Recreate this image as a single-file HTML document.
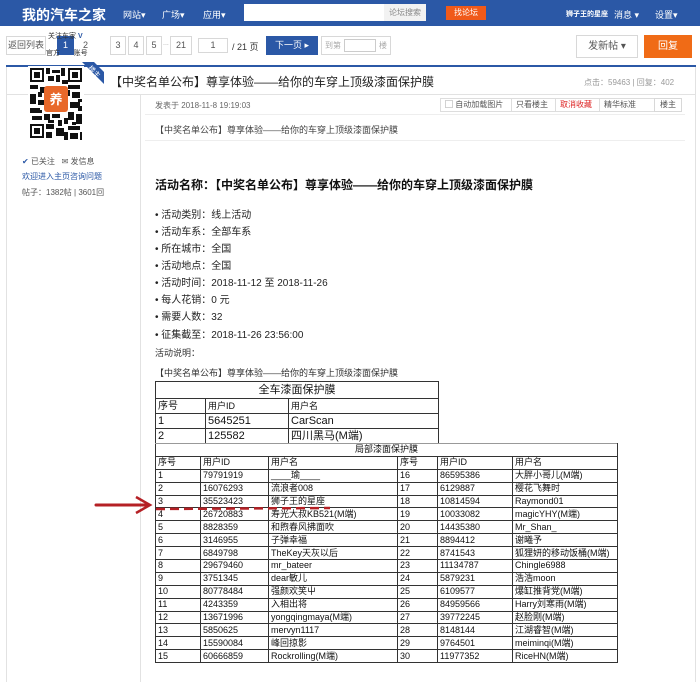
<!DOCTYPE html>
<html><head><meta charset="utf-8"><style>
*{margin:0;padding:0;box-sizing:border-box}
body{width:700px;height:682px;background:#fff;font-family:"Liberation Sans","Noto Sans CJK SC",sans-serif;color:#333;position:relative;overflow:hidden;font-size:9px}
.a{position:absolute;white-space:nowrap}
.nav{left:0;top:0;width:700px;height:26px;background:#2b58a6;color:#fff}
.btn{position:absolute;border:1px solid #d8d8d8;background:#fff;height:19px;line-height:17px;text-align:center;font-size:9px;color:#555;white-space:nowrap;overflow:hidden}
table{border-collapse:collapse;table-layout:fixed;position:absolute;font-family:"Liberation Sans","Noto Sans CJK SC",sans-serif;color:#111}
td{border:1px solid #333;padding:0 2px;white-space:nowrap;overflow:hidden}
.t1 td{font-size:11px;height:15px;line-height:13px}
.t2 td{font-size:9px;height:12.9px;line-height:11px}
.li{left:155px;font-size:10px;color:#222}
</style></head><body>
<div class="a nav">
 <div class="a" style="left:22px;top:5px;font-size:14px;font-weight:bold">我的汽车之家</div>
 <div class="a" style="left:123px;top:8px;font-size:9px">网站▾</div>
 <div class="a" style="left:162px;top:8px;font-size:9px">广场▾</div>
 <div class="a" style="left:203px;top:8px;font-size:9px">应用▾</div>
 <div class="a" style="left:244px;top:4px;width:140px;height:17px;background:#fff"></div>
 <div class="a" style="left:384px;top:4px;width:42px;height:17px;background:#f2f2f2;color:#888;font-size:8px;line-height:17px;text-align:center">论坛搜索</div>
 <div class="a" style="left:446px;top:6px;width:40px;height:14px;background:#f05a1a;font-size:8px;line-height:14px;text-align:center">找论坛</div>
 <div class="a" style="left:566px;top:9px;font-size:7px;font-weight:bold">狮子王的星座</div>
 <div class="a" style="left:614px;top:8px;font-size:9px">消息 ▾</div>
 <div class="a" style="left:655px;top:8px;font-size:9px">设置▾</div>
</div>
<div class="btn" style="left:6px;top:36px;width:40px">返回列表</div>
<div class="btn" style="left:57px;top:36px;width:17px;background:#2b58a6;color:#fff;border-color:#2b58a6">1</div>
<div class="a" style="left:48px;top:31px;font-size:7px;color:#333">关注车家 <b style="color:#2b58a6">V</b></div>
<div class="a" style="left:46px;top:48px;font-size:7px;color:#333">官方 &nbsp;&nbsp;&nbsp;&nbsp;&nbsp; 账号</div>
<div class="a" style="left:83px;top:40px;font-size:9px;color:#555">2</div>
<div class="btn" style="left:110px;top:36px;width:16px">3</div>
<div class="btn" style="left:128px;top:36px;width:16px">4</div>
<div class="btn" style="left:146px;top:36px;width:16px">5</div>
<div class="a" style="left:163px;top:40px;color:#aaa;font-size:7px">...</div>
<div class="btn" style="left:170px;top:36px;width:22px">21</div>
<div class="btn" style="left:198px;top:38px;width:30px;height:15px;line-height:13px">1</div>
<div class="a" style="left:232px;top:40px;font-size:9px">/ 21 页</div>
<div class="btn" style="left:266px;top:36px;width:52px;background:#2b58a6;color:#fff;border-color:#2b58a6">下一页 ▸</div>
<div class="btn" style="left:321px;top:36px;width:70px;text-align:left;padding-left:3px;color:#aaa;font-size:8px">到第<span style="display:inline-block;width:32px;height:13px;border:1px solid #ccc;vertical-align:middle;margin:0 3px"></span>楼</div>
<div class="btn" style="left:576px;top:35px;width:62px;height:23px;line-height:21px;font-size:10px">发新帖 ▾</div>
<div class="a" style="left:644px;top:35px;width:48px;height:23px;background:#f06b16;color:#fff;font-size:10px;line-height:23px;text-align:center">回复</div>
<div class="a" style="left:6px;top:65px;width:690px;height:2px;background:#2b58a6"></div>
<div class="a" style="left:6px;top:67px;width:690px;height:28px;border:1px solid #e2e2e2;border-top:none;background:#fff"></div>
<div class="a" style="left:110px;top:73px;font-size:12px;color:#222">【中奖名单公布】尊享体验——给你的车穿上顶级漆面保护膜</div>
<div class="a" style="left:584px;top:77px;font-size:8px;color:#999">点击：59463 | 回复：402</div>
<div class="a" style="left:140px;top:95px;width:1px;height:587px;background:#e2e2e2"></div>
<div class="a" style="left:6px;top:95px;width:1px;height:587px;background:#e2e2e2"></div>
<div class="a" style="left:695px;top:95px;width:1px;height:587px;background:#e2e2e2"></div>
<svg class="a" style="left:28px;top:66px" width="56" height="76" viewBox="0 0 56 76">
<rect width="56" height="76" fill="#fff"/>
<g fill="#111">
<rect x="2" y="2" width="14" height="14"/><rect x="40" y="2" width="14" height="14"/><rect x="2" y="58" width="14" height="14"/>
</g><g fill="#fff"><rect x="4" y="4" width="10" height="10"/><rect x="42" y="4" width="10" height="10"/><rect x="4" y="60" width="10" height="10"/></g>
<g fill="#111"><rect x="6" y="6" width="6" height="6"/><rect x="44" y="6" width="6" height="6"/><rect x="6" y="62" width="6" height="6"/>
<rect x="18" y="2" width="4" height="6"/><rect x="24" y="4" width="8" height="3"/><rect x="33" y="2" width="4" height="8"/><rect x="20" y="10" width="6" height="5"/><rect x="28" y="9" width="4" height="7"/>
<rect x="2" y="19" width="8" height="4"/><rect x="12" y="21" width="6" height="6"/><rect x="40" y="19" width="12" height="4"/><rect x="44" y="26" width="8" height="6"/>
<rect x="2" y="28" width="6" height="10"/><rect x="10" y="34" width="6" height="5"/><rect x="42" y="36" width="10" height="6"/><rect x="2" y="42" width="10" height="5"/>
<rect x="40" y="46" width="6" height="8"/><rect x="48" y="48" width="6" height="10"/><rect x="18" y="58" width="8" height="5"/><rect x="28" y="62" width="8" height="8"/>
<rect x="40" y="60" width="12" height="4"/><rect x="42" y="67" width="8" height="6"/><rect x="18" y="66" width="6" height="6"/><rect x="4" y="50" width="10" height="4"/>
<rect x="34" y="14" width="6" height="4"/><rect x="16" y="48" width="6" height="6"/><rect x="36" y="52" width="4" height="6"/>
<rect x="24" y="48" width="8" height="4"/><rect x="30" y="54" width="4" height="6"/><rect x="20" y="54" width="6" height="3"/><rect x="10" y="26" width="4" height="5"/>
<rect x="50" y="40" width="4" height="5"/><rect x="50" y="33" width="4" height="3"/><rect x="38" y="24" width="4" height="6"/><rect x="10" y="44" width="4" height="3"/>
<rect x="36" y="66" width="4" height="8"/><rect x="52" y="66" width="2" height="8"/><rect x="44" y="56" width="4" height="3"/></g>
<rect x="16" y="20" width="24" height="26" rx="3" fill="#e8682a"/>
<text x="28" y="38" font-size="13" fill="#fff" text-anchor="middle" font-weight="bold" font-family="Noto Sans CJK SC">养</text>
</svg>
<svg class="a" style="left:82px;top:62px" width="22" height="22"><polygon points="0,0 12,0 22,10 22,22" fill="#2b58a6"/><text x="12" y="12" font-size="7" fill="#fff" transform="rotate(45 12 10)" text-anchor="middle" font-family="Noto Sans CJK SC">楼主</text></svg>
<div class="a" style="left:22px;top:156px;font-size:8px;color:#555"><span style="color:#2b58a6">✔</span> 已关注 &nbsp; ✉ 发信息</div>
<div class="a" style="left:22px;top:171px;font-size:8px;color:#2b58a6">欢迎进入主页咨询问题</div>
<div class="a" style="left:22px;top:187px;font-size:8px;color:#555">帖子：1382帖 | 3601回</div>
<div class="a" style="left:155px;top:100px;font-size:8px;color:#666">发表于 2018-11-8 19:19:03</div>
<div class="a" style="left:440px;top:98px;width:232px;height:14px;border:1px solid #ddd;font-size:8px;line-height:12px;color:#555">
<span class="a" style="left:4px">▢ 自动加载图片</span><span class="a" style="left:70px;border-left:1px solid #ddd;padding-left:4px">只看楼主</span><span class="a" style="left:114px;border-left:1px solid #ddd;padding-left:4px;color:#d22">取消收藏</span><span class="a" style="left:158px;border-left:1px solid #ddd;padding-left:4px">精华标准</span></div>
<div class="btn" style="left:654px;top:98px;width:28px;height:14px;line-height:12px;font-size:8px">楼主</div>
<div class="a" style="left:145px;top:114px;width:540px;height:1px;background:#eee"></div>
<div class="a" style="left:155px;top:123px;font-size:9px;color:#444">【中奖名单公布】尊享体验——给你的车穿上顶级漆面保护膜</div>
<div class="a" style="left:145px;top:140px;width:540px;height:1px;background:#eee"></div>
<div class="a" style="left:155px;top:176px;font-size:12px;font-weight:bold;color:#111">活动名称：【中奖名单公布】尊享体验——给你的车穿上顶级漆面保护膜</div>
<div class="a li" style="top:206px">• 活动类别：线上活动</div>
<div class="a li" style="top:223px">• 活动车系：全部车系</div>
<div class="a li" style="top:240px">• 所在城市：全国</div>
<div class="a li" style="top:257px">• 活动地点：全国</div>
<div class="a li" style="top:274px">• 活动时间：2018-11-12 至 2018-11-26</div>
<div class="a li" style="top:291px">• 每人花销：0 元</div>
<div class="a li" style="top:308px">• 需要人数：32</div>
<div class="a li" style="top:326px">• 征集截至：2018-11-26 23:56:00</div>
<div class="a" style="left:155px;top:346px;font-size:9px;color:#333">活动说明：</div>
<div class="a" style="left:155px;top:366px;font-size:9px;color:#333">【中奖名单公布】尊享体验——给你的车穿上顶级漆面保护膜</div>
<table class="t1" style="left:155px;top:381px;width:283px">
<colgroup><col style="width:50px"><col style="width:83px"><col style="width:150px"></colgroup>
<tr><td colspan="3" style="text-align:center;height:17px">全车漆面保护膜</td></tr>
<tr><td style="font-size:10px">序号</td><td style="font-size:9px">用户ID</td><td style="font-size:9px">用户名</td></tr>
<tr><td>1</td><td>5645251</td><td>CarScan</td></tr>
<tr><td>2</td><td>125582</td><td>四川黑马(M端)</td></tr>
</table>
<table class="t2" style="left:155px;top:443px;width:462px">
<colgroup><col style="width:45px"><col style="width:68px"><col style="width:129px"><col style="width:40px"><col style="width:75px"><col style="width:105px"></colgroup>
<tr><td colspan="6" style="text-align:center;border-top-color:#999">局部漆面保护膜</td></tr>
<tr><td>序号</td><td>用户ID</td><td>用户名</td><td>序号</td><td>用户ID</td><td>用户名</td></tr>
<tr><td>1</td><td>79791919</td><td>____瑜____</td><td>16</td><td>86595386</td><td>大胖小哥儿(M端)</td></tr>
<tr><td>2</td><td>16076293</td><td>流浪者008</td><td>17</td><td>6129887</td><td>樱花飞舞时</td></tr>
<tr><td>3</td><td>35523423</td><td>狮子王的星座</td><td>18</td><td>10814594</td><td>Raymond01</td></tr>
<tr><td>4</td><td>26720883</td><td>寿光大叔KB521(M端)</td><td>19</td><td>10033082</td><td>magicYHY(M端)</td></tr>
<tr><td>5</td><td>8828359</td><td>和煦春风拂面吹</td><td>20</td><td>14435380</td><td>Mr_Shan_</td></tr>
<tr><td>6</td><td>3146955</td><td>子弹幸福</td><td>21</td><td>8894412</td><td>谢曦予</td></tr>
<tr><td>7</td><td>6849798</td><td>TheKey天灰以后</td><td>22</td><td>8741543</td><td>狐狸妍的移动饭桶(M端)</td></tr>
<tr><td>8</td><td>29679460</td><td>mr_bateer</td><td>23</td><td>11134787</td><td>Chingle6988</td></tr>
<tr><td>9</td><td>3751345</td><td>dear敏儿</td><td>24</td><td>5879231</td><td>浩浩moon</td></tr>
<tr><td>10</td><td>80778484</td><td>强颜欢笑屮</td><td>25</td><td>6109577</td><td>爆缸推背党(M端)</td></tr>
<tr><td>11</td><td>4243359</td><td>入相出将</td><td>26</td><td>84959566</td><td>Harry刘寒雨(M端)</td></tr>
<tr><td>12</td><td>13671996</td><td>yongqingmaya(M端)</td><td>27</td><td>39772245</td><td>赵脸刚(M端)</td></tr>
<tr><td>13</td><td>5850625</td><td>mervyn1117</td><td>28</td><td>8148144</td><td>江湖睿智(M端)</td></tr>
<tr><td>14</td><td>15590084</td><td>峰回掠影</td><td>29</td><td>9764501</td><td>meiminqi(M端)</td></tr>
<tr><td>15</td><td>60666859</td><td>Rockrolling(M端)</td><td>30</td><td>11977352</td><td>RiceHN(M端)</td></tr>
</table>
<svg class="a" style="left:90px;top:494px" width="250" height="22">
<line x1="6" y1="11" x2="58" y2="11" stroke="#b52025" stroke-width="3" stroke-linecap="round"/>
<polyline points="46,3 60,11 46,19" fill="none" stroke="#b52025" stroke-width="2.5"/>
<line x1="66" y1="15" x2="240" y2="14" stroke="#b52025" stroke-width="2.5" stroke-dasharray="9,5"/>
</svg>
</body></html>
